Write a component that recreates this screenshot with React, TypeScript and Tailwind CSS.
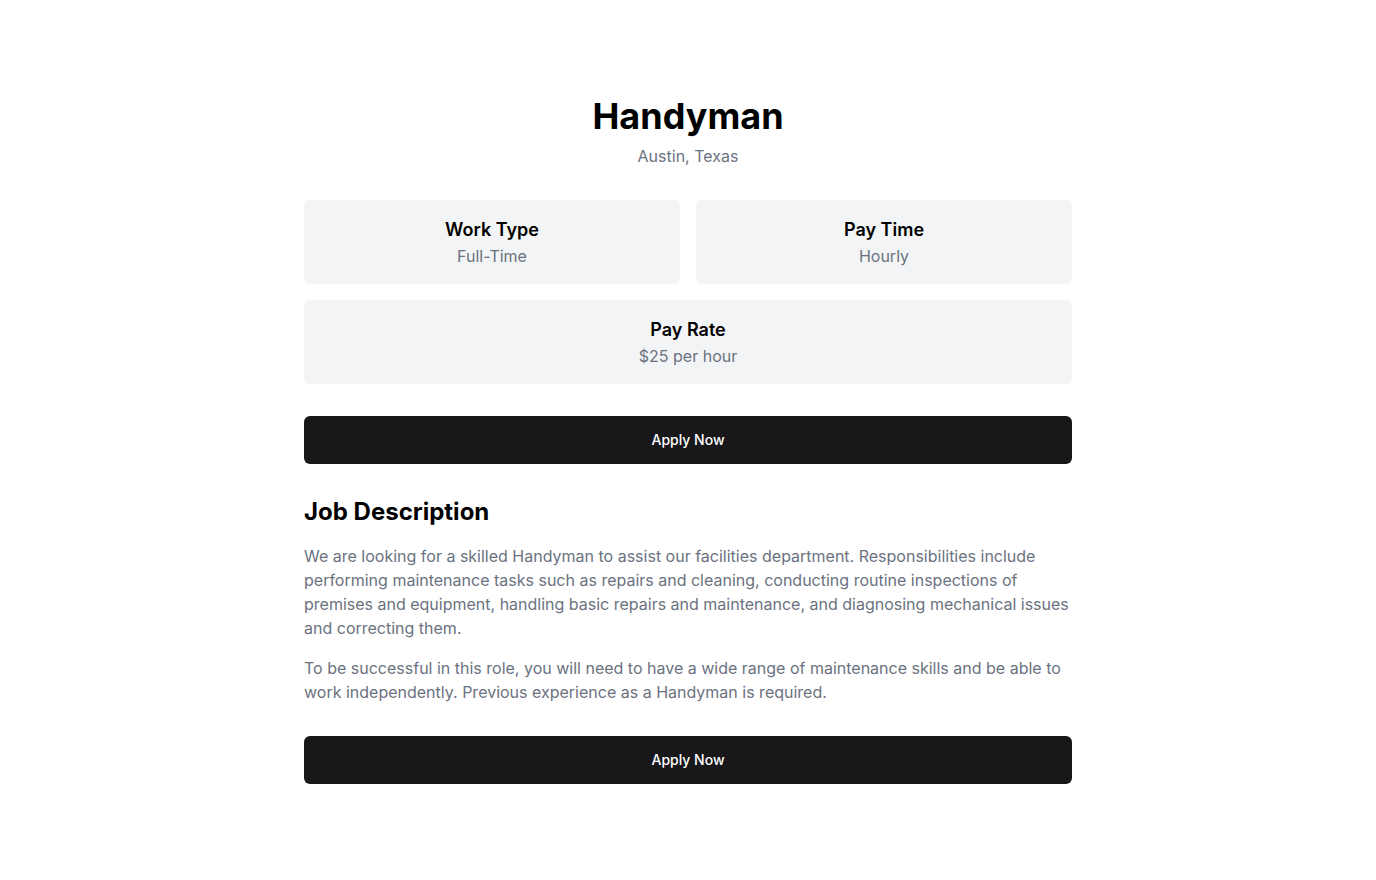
export default function App() {
  return (
    <div className="min-h-screen bg-white" style={{ fontFamily: 'Inter, "Noto Sans", sans-serif' }}>
      <div className="mx-auto max-w-3xl pt-24 pb-24">
        {/* Header */}
        <div className="text-center mb-8">
          <h1 className="text-4xl font-bold text-black">Handyman</h1>
          <p className="mt-2 text-base text-[#6b7280]">Austin, Texas</p>
        </div>

        {/* Info cards */}
        <div className="grid grid-cols-2 gap-4">
          <div className="rounded-md bg-[#f3f4f6] p-4 text-center">
            <h3 className="text-lg font-semibold text-black">Work Type</h3>
            <p className="text-base text-[#6b7280]">Full-Time</p>
          </div>
          <div className="rounded-md bg-[#f3f4f6] p-4 text-center">
            <h3 className="text-lg font-semibold text-black">Pay Time</h3>
            <p className="text-base text-[#6b7280]">Hourly</p>
          </div>
          <div className="col-span-2 rounded-md bg-[#f3f4f6] p-4 text-center">
            <h3 className="text-lg font-semibold text-black">Pay Rate</h3>
            <p className="text-base text-[#6b7280]">$25 per hour</p>
          </div>
        </div>

        <button className="mt-8 flex h-12 w-full items-center justify-center rounded-md bg-[#18181b] text-sm font-medium text-white">
          Apply Now
        </button>

        {/* Description */}
        <h2 className="mt-8 mb-4 text-2xl font-bold text-black">Job Description</h2>
        <div className="space-y-4 text-base text-[#6b7280]">
          <p>
            We are looking for a skilled Handyman to assist our facilities department. Responsibilities include
            performing maintenance tasks such as repairs and cleaning, conducting routine inspections of premises and
            equipment, handling basic repairs and maintenance, and diagnosing mechanical issues and correcting them.
          </p>
          <p>
            To be successful in this role, you will need to have a wide range of maintenance skills and be able to work
            independently. Previous experience as a Handyman is required.
          </p>
        </div>

        <button className="mt-8 flex h-12 w-full items-center justify-center rounded-md bg-[#18181b] text-sm font-medium text-white">
          Apply Now
        </button>
      </div>
    </div>
  );
}
